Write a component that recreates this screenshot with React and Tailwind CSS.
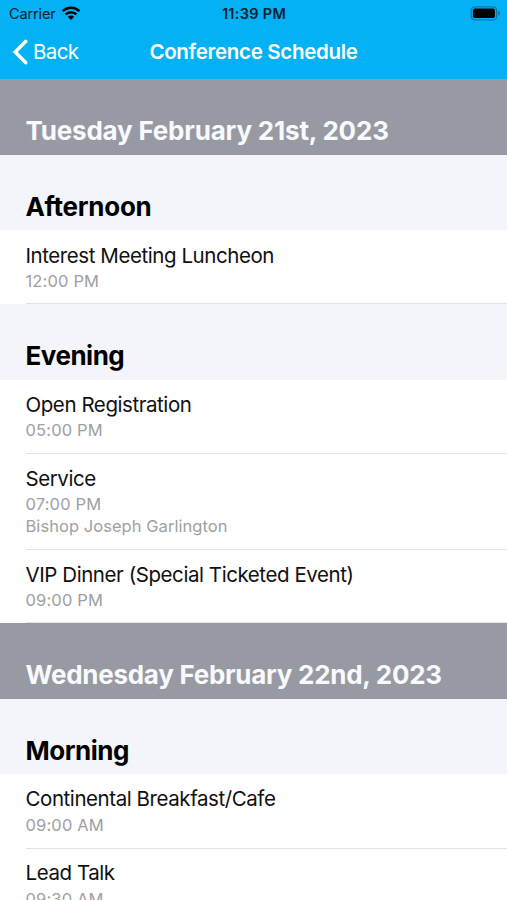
import React from 'react';

const schedule = [
    {
        day: "Tuesday February 21st, 2023",
        spacing: "tracking-[-0.19px]",
        sections: [
            {
                name: "Afternoon",
                style: "h-[75px] tracking-[-0.25px]",
                events: [
                    { title: "Interest Meeting Luncheon", time: "12:00 PM", style: "h-[74px] pt-[12px]" }
                ]
            },
            {
                name: "Evening",
                style: "h-[76px] tracking-[-0.5px]",
                events: [
                    { title: "Open Registration", time: "05:00 PM", style: "h-[74px] pt-[11px]" },
                    { title: "Service", time: "07:00 PM", speaker: "Bishop Joseph Garlington", style: "h-[96px] pt-[11px]" },
                    { title: "VIP Dinner (Special Ticketed Event)", time: "09:00 PM", style: "h-[73px] pt-[11px]" }
                ]
            }
        ]
    },
    {
        day: "Wednesday February 22nd, 2023",
        spacing: "tracking-[-0.27px]",
        sections: [
            {
                name: "Morning",
                style: "h-[75px] tracking-[-0.48px]",
                events: [
                    { title: "Continental Breakfast/Cafe", time: "09:00 AM", style: "h-[75px] pt-[11px] gap-px" },
                    { title: "Lead Talk", time: "09:30 AM", style: "h-[74px] pt-[10px] gap-px" }
                ]
            }
        ]
    }
];

const StatusBar = () => (
    <div className="grid h-[27px] grid-cols-3 items-center pr-[6px] pl-[9px] text-[14.5px] text-[#06222f]">
        <div className="flex items-center gap-[5px]">
            <span className="tracking-[-0.01em]">Carrier</span>
            <svg width="20" height="15" viewBox="0 0 20 15" fill="none" stroke="#000" strokeWidth="2.5">
                <path d="M1.6 5.2a12 12 0 0 1 16.8 0" />
                <path d="M4.6 8.4a7.7 7.7 0 0 1 10.8 0" />
                <path d="M10 14 6.8 10.7a4.6 4.6 0 0 1 6.4 0Z" fill="#000" stroke="none" />
            </svg>
        </div>
        <div className="-ml-[2px] text-center font-semibold tracking-[0.02em]">11:39 PM</div>
        <div className="flex justify-end">
            <svg width="31" height="15" viewBox="0 0 31 15">
                <rect x="1.2" y="0.8" width="25.4" height="13" rx="3.6" fill="none" stroke="#0679a5" strokeWidth="1.3" />
                <rect x="2.9" y="2.5" width="22" height="9.6" rx="1.8" fill="#000" />
                <path d="M28.2 5v4.6c2.4-.5 2.4-4.1 0-4.6Z" fill="#0679a5" />
            </svg>
        </div>
    </div>
);

const NavBar = () => (
    <div className="grid h-[51px] grid-cols-[1fr_auto_1fr] items-center text-white">
        <button className="flex items-center gap-[5px] pl-[13px] text-left">
            <svg className="mb-[2px]" width="15" height="26" viewBox="0 0 15 26" fill="none" stroke="#fff" strokeWidth="3.6" strokeLinecap="round">
                <path d="M12.6 2.4 2.2 13l10.4 10.6" />
            </svg>
            <span className="text-[20.5px] tracking-[-0.03em]">Back</span>
        </button>
        <h1 className="text-[20.5px] font-semibold tracking-[-0.015em]">Conference Schedule</h1>
        <div></div>
    </div>
);

const EventRow = ({ event }) => (
    <div className={`ml-[25.5px] flex flex-col border-b border-[#e3e3e6] ${event.style}`}>
        <p className="text-[20.5px] leading-[28px] tracking-[-0.021em] text-[#101010]">{event.title}</p>
        <p className="text-[16.5px] leading-[22px] tracking-[0.15px] text-[#a0a0a2]">{event.time}</p>
        {event.speaker && (
            <p className="text-[16.5px] leading-[22px] tracking-[0.05px] text-[#a0a0a2]">{event.speaker}</p>
        )}
    </div>
);

const App = () => {
    return (
        <div className="h-[900px] w-full overflow-hidden bg-white font-['Inter',sans-serif]">
            <header className="h-[79px] bg-[#04b1f5]">
                <StatusBar />
                <NavBar />
            </header>
            {schedule.map(day => (
                <div key={day.day}>
                    <h2 className={`h-[76px] bg-[#979aa3] pt-[34px] pl-[25.5px] text-[26px] leading-[36px] font-bold whitespace-nowrap text-[#f8f9fc] ${day.spacing}`}>
                        {day.day}
                    </h2>
                    {day.sections.map(section => (
                        <div key={section.name}>
                            <h3 className={`bg-[#f3f5fa] pt-[34px] pl-[25.5px] text-[26px] leading-[36px] font-bold text-black ${section.style}`}>
                                {section.name}
                            </h3>
                            {section.events.map(event => (
                                <EventRow key={event.title} event={event} />
                            ))}
                        </div>
                    ))}
                </div>
            ))}
        </div>
    );
};

export default App;
